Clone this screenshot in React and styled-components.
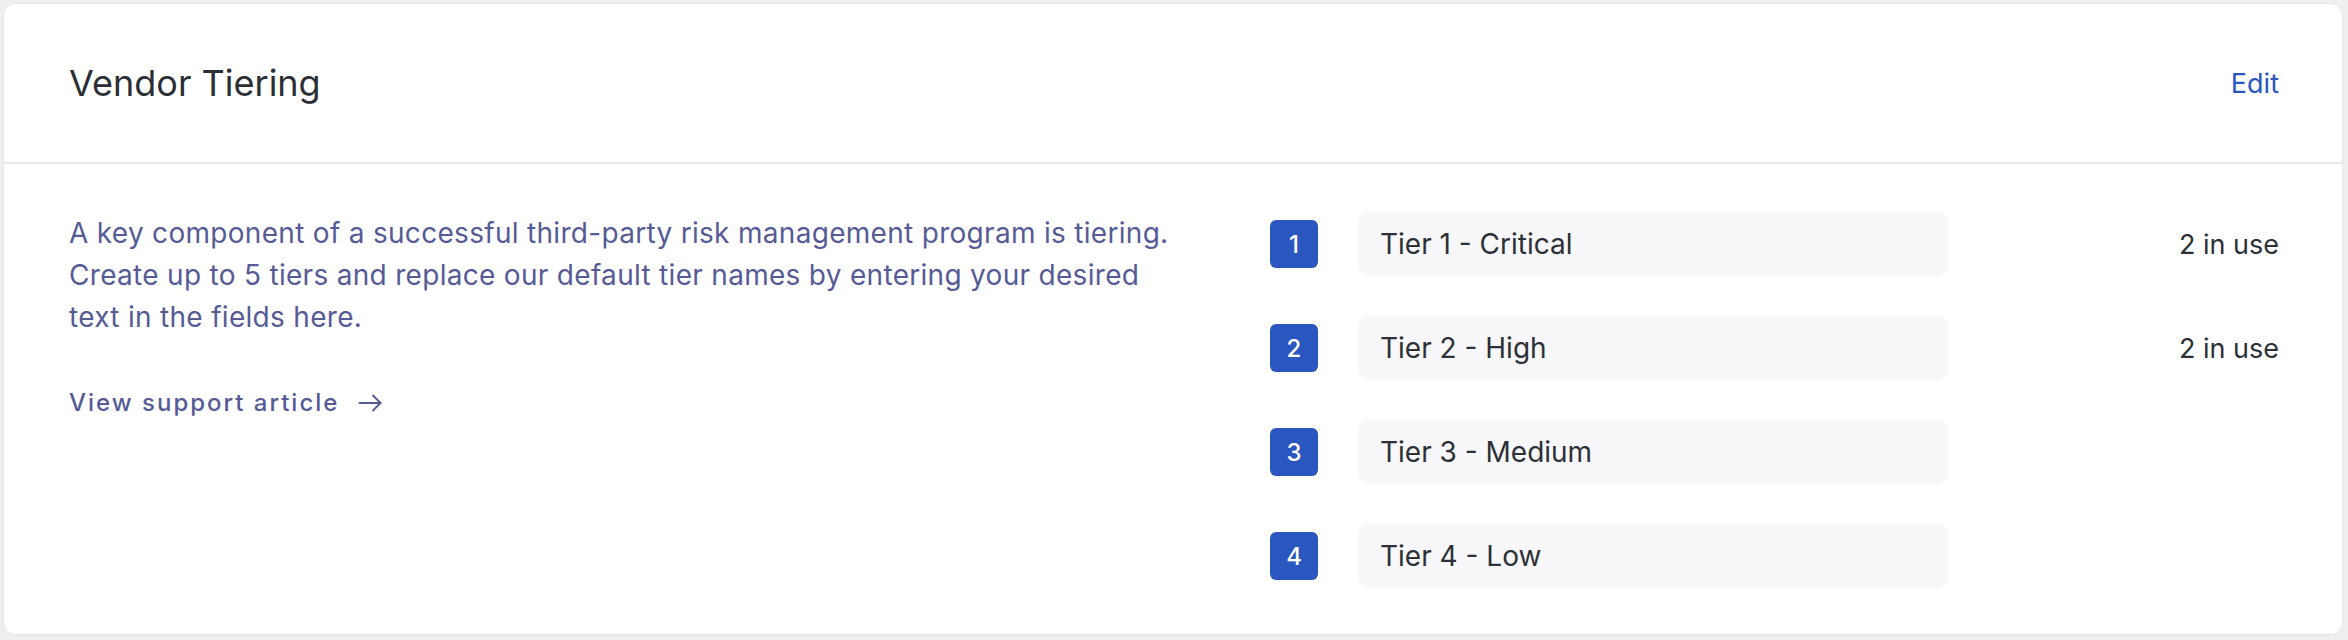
import React from 'react'
import styled, { createGlobalStyle } from 'styled-components'

const GlobalStyle = createGlobalStyle`
    html, body {
        margin: 0;
        padding: 0;
        background: #efefef;
    }
    body {
        font-family: Inter, "Noto Sans", sans-serif;
        -webkit-font-smoothing: antialiased;
    }
`

const Page = styled.div`
    padding: 3px 5px 5px 3px;
`

const Card = styled.section`
    background: #ffffff;
    border: 1px solid #e6e6e6;
    border-radius: 12px;
    overflow: hidden;
`

const Header = styled.header`
    display: flex;
    align-items: center;
    justify-content: space-between;
    height: 158px;
    padding: 0 63px 0 65px;
    border-bottom: 2px solid #e8e8e8;
`

const Title = styled.h2`
    margin: 0;
    font-size: 36px;
    font-weight: 400;
    color: #2b2e35;
`

const EditLink = styled.a`
    font-size: 27px;
    color: #2a56c0;
    text-decoration: none;
    cursor: pointer;
`

const Body = styled.div`
    display: grid;
    grid-template-columns: 1fr 1009px;
    padding: 48px 63px 46px 65px;
`

const Intro = styled.div`
    display: flex;
    flex-direction: column;
    gap: 50px;
`

const Description = styled.p`
    margin: 0;
    max-width: 1112px;
    font-size: 28px;
    letter-spacing: 0.3px;
    line-height: 42px;
    color: #565b95;
`

const SupportLink = styled.a`
    display: inline-flex;
    align-items: center;
    gap: 19px;
    font-size: 24px;
    font-weight: 500;
    letter-spacing: 2px;
    color: #565b95;
    text-decoration: none;
    cursor: pointer;
`

const TierList = styled.div`
    display: flex;
    flex-direction: column;
    gap: 40px;
`

const TierRow = styled.div`
    display: flex;
    align-items: center;
`

const Badge = styled.span`
    display: flex;
    align-items: center;
    justify-content: center;
    width: 48px;
    height: 48px;
    flex: none;
    border-radius: 6px;
    background: #2a56c0;
    color: #ffffff;
    font-size: 24px;
    font-weight: 500;
`

const TierInput = styled.input`
    box-sizing: border-box;
    width: 590px;
    height: 64px;
    margin-left: 40px;
    padding: 0 22px;
    border: none;
    border-radius: 10px;
    background: #f8f8fa;
    font-family: Inter, "Noto Sans", sans-serif;
    font-size: 28px;
    color: #2d3036;
    outline: none;
`

const Usage = styled.span`
    margin-left: auto;
    font-size: 27px;
    color: #2d3036;
`

const tiers = [
    { id: 1, name: 'Tier 1 - Critical', inUse: 2 },
    { id: 2, name: 'Tier 2 - High', inUse: 2 },
    { id: 3, name: 'Tier 3 - Medium', inUse: 0 },
    { id: 4, name: 'Tier 4 - Low', inUse: 0 },
]

const ArrowRight = () => (
    <svg width="24" height="24" viewBox="0 0 24 24" fill="none" stroke="currentColor"
        strokeWidth="1.8" strokeLinecap="round" strokeLinejoin="round">
        <path d="M1.5 12h21" />
        <path d="M15 4.5l7.5 7.5-7.5 7.5" />
    </svg>
)

export default function App() {
    return (
        <Page>
            <GlobalStyle />
            <Card>
                <Header>
                    <Title>Vendor Tiering</Title>
                    <EditLink>Edit</EditLink>
                </Header>
                <Body>
                    <Intro>
                        <Description>
                            A key component of a successful third-party risk management program is tiering.
                            Create up to 5 tiers and replace our default tier names by entering your desired
                            text in the fields here.
                        </Description>
                        <div>
                            <SupportLink>
                                View support article
                                <ArrowRight />
                            </SupportLink>
                        </div>
                    </Intro>
                    <TierList>
                        {tiers.map((tier) => (
                            <TierRow key={tier.id}>
                                <Badge>{tier.id}</Badge>
                                <TierInput readOnly defaultValue={tier.name} />
                                {tier.inUse > 0 && <Usage>{tier.inUse} in use</Usage>}
                            </TierRow>
                        ))}
                    </TierList>
                </Body>
            </Card>
        </Page>
    )
}
